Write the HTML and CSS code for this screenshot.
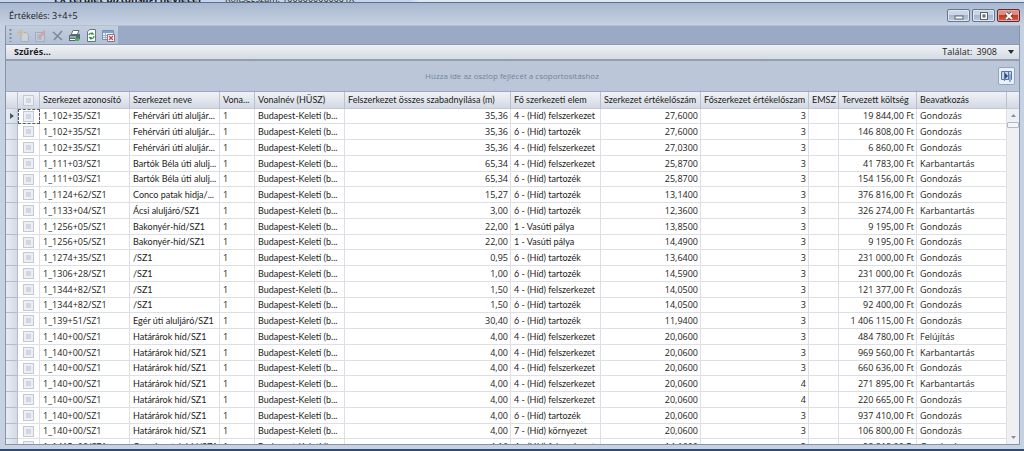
FILE: index.html
```html
<!DOCTYPE html>
<html lang="hu">
<head>
<meta charset="utf-8">
<title>Értékelés: 3+4+5</title>
<link rel="stylesheet" href="styles.css">
</head>
<body>
<div class="behind" aria-hidden="true"><b class="behind-title">EX terület biztonsági nevlecei</b><span class="behind-field">Költségszám: 1000000000001X</span></div>
<main class="window">
  <header class="titlebar">
    <h1 class="title">Értékelés: 3+4+5</h1>
    <div class="controls">
      <button class="ctl" type="button" aria-label="Kis méret"><svg width="12" height="10" viewBox="0 0 12 10"><rect x="2" y="5" width="8" height="3" fill="#fff" stroke="#5b6470"/></svg></button>
      <button class="ctl" type="button" aria-label="Teljes méret"><svg width="12" height="10" viewBox="0 0 12 10"><rect x="2.500" y="1.500" width="7" height="7" fill="#fff" stroke="#5b6470"/><rect x="5" y="4" width="2" height="2" fill="#8c9db4" stroke="#5b6470"/></svg></button>
      <button class="ctl close" type="button" aria-label="Bezárás"><svg width="12" height="10" viewBox="0 0 12 10"><path d="M3 2l6 6M9 2L3 8" stroke="#6d3a3a" stroke-width="3.400"/><path d="M3 2l6 6M9 2L3 8" stroke="#fff" stroke-width="2"/></svg></button>
    </div>
  </header>
  <div class="client">
    <div class="toolrow">
      <div class="toolbar">
        <svg class="grip" width="3" height="14" viewBox="0 0 3 14"><path d="M1.500 1v13" stroke="#7f8ca5" stroke-width="2" stroke-dasharray="2 2"/></svg>
        <button class="tool" type="button" aria-label="Új" disabled><svg width="13" height="13" viewBox="0 0 13 13"><path d="M4 3.500h5l2.500 2.500v6.500H4z" fill="#cdd2da" stroke="#a9afba"/><path d="M3.500 0v7M0 3.500h7M1 1l5 5M6 1L1 6" stroke="#d3b998"/></svg></button>
        <button class="tool" type="button" aria-label="Szerkesztés" disabled><svg width="13" height="13" viewBox="0 0 13 13"><path d="M1.500 3.500h9v9h-9z" fill="#c6ccd8" stroke="#a3abba"/><path d="M3 6h3M3 8h3M3 10h5" stroke="#a3abba"/><path d="M5 9l6-7" stroke="#cfa3a8" stroke-width="2.500"/></svg></button>
        <button class="tool" type="button" aria-label="Törlés" disabled><svg width="13" height="13" viewBox="0 0 13 13"><path d="M2 3l9 8M11 2L3 11" stroke="#7d8797" stroke-width="1.600" fill="none"/></svg></button>
        <button class="tool" type="button" aria-label="Nyomtatás"><svg width="13" height="13" viewBox="0 0 13 13"><path d="M5 1.500h6L9 6H3z" fill="#fff" stroke="#64737b"/><path d="M1 6.500L4 5h8v5l-3 2H1z" fill="#546b70"/><path d="M2 7.500h6v1H2z" fill="#dce8e4"/><path d="M7 9h4v3H7z" fill="#58a65a"/><path d="M2 10h5v1H2z" fill="#fff"/></svg></button>
        <button class="tool" type="button" aria-label="Frissítés"><svg width="13" height="13" viewBox="0 0 13 13"><path d="M2.500 2.500L5 .500h5.500v12h-8z" fill="#fff" stroke="#66758a"/><path d="M4 6c0-2 3-2 4-1M9 7c0 3-3 3-4 2" fill="none" stroke="#38903f" stroke-width="1.300"/><path d="M7 3l2.500 2.500H6zM6 11L3.500 8H7z" fill="#38903f"/></svg></button>
        <button class="tool" type="button" aria-label="Exportálás"><svg width="13" height="13" viewBox="0 0 13 13"><path d="M.500 1.500h11v9H.500z" fill="#eef2f8" stroke="#7890b5"/><path d="M1 2h10v2H1z" fill="#7da0d2"/><path d="M1 6.500h5M1 8.500h5M3.500 4v6" stroke="#a5b2c8"/><path d="M5.500 5.500h7v7h-7z" fill="#fff" stroke="#8f7480"/><path d="M7 7l4 4M11 7l-4 4" stroke="#c54654" stroke-width="1.400"/></svg></button>
      </div>
    </div>
    <div class="filter">
      <strong>Szűrés...</strong>
      <button class="hits" type="button">Találat: <span class="count">3908</span><svg width="6" height="4" viewBox="0 0 6 4"><path d="M0 0h6L3 4z" fill="#222c3c"/></svg></button>
    </div>
    <div class="group">
      <span class="hint">Húzza ide az oszlop fejlécét a csoportosításhoz</span>
      <button class="columns" type="button" aria-label="Oszlopválasztó"><svg width="13" height="13" viewBox="0 0 13 13"><path d="M1.500 1.500h10v8h-10z" fill="#c3d4ec" stroke="#5877a5"/><path d="M4.500 2v9M8.500 2v8" stroke="#5877a5"/><path d="M5 3l3 3-3 3z" fill="#294a7b"/><path d="M9 4h2v8H9z" fill="#8fa9cf"/></svg></button>
    </div>
    <div class="grid">
      <table class="table">
        <colgroup><col class="w-mark"><col class="w-check"><col class="w-90"><col class="w-90"><col class="w-line"><col class="w-90"><col class="w-span"><col class="w-90"><col class="w-score"><col class="w-main"><col class="w-emsz"><col class="w-cost"><col></colgroup>
        <thead><tr><th></th><th class="check"><input type="checkbox" aria-label="Összes kijelölése"></th><th>Szerkezet azonosító</th><th>Szerkezet neve</th><th>Vona...</th><th>Vonalnév (HÜSZ)</th><th>Felszerkezet összes szabadnyílása (m)</th><th>Fő szerkezeti elem</th><th>Szerkezet értékelőszám</th><th>Főszerkezet értékelőszam</th><th>EMSZ</th><th>Tervezett költség</th><th>Beavatkozás</th></tr></thead>
        <tbody id="rows"></tbody>
      </table>
      <div class="scroll">
        <div class="scroll-head"></div>
        <button class="arrow" type="button" aria-label="Fel"><svg width="5" height="3" viewBox="0 0 5 3"><path d="M0 3h5L2.500 0z" fill="#8a919c"/></svg></button>
        <div class="thumb"></div>
        <button class="arrow down" type="button" aria-label="Le"><svg width="5" height="3" viewBox="0 0 5 3"><path d="M0 0h5L2.500 3z" fill="#8a919c"/></svg></button>
      </div>
    </div>
  </div>
</main>
<script src="rows.js"></script>
</body>
</html>
```
FILE: styles.css
```css
* { box-sizing: border-box; }

body {
  margin: 0;
  height: 100vh;
  overflow: hidden;
  display: flex;
  flex-direction: column;
  background: #33486b;
  color: #1c1c20;
  font: 9px/12px "Segoe UI", "Open Sans", "Noto Sans", sans-serif;
}

button {
  font: inherit;
  color: inherit;
  margin: 0;
  padding: 0;
  border: 0;
  background: none;
  display: flex;
  align-items: center;
  justify-content: center;
}

svg { display: block; flex: none; }

.behind {
  flex: none;
  height: 2px;
  overflow: hidden;
  display: flex;
  align-items: flex-end;
  gap: 24px;
  padding-left: 54px;
  background: linear-gradient(90deg, #c9d5e6 40%, #dfe7f3 41%);
  line-height: 6px;
}
.behind-title { font-size: 10px; }

.window {
  flex: 1;
  min-height: 0;
  margin-bottom: 2px;
  display: flex;
  flex-direction: column;
  padding: 0 4px 4px 5px;
  border-top: 1px solid #56719a;
  background: linear-gradient(#a9b8cf, #c6d1e2 22px, #c6d1e2);
}

.titlebar {
  flex: none;
  height: 22px;
  display: flex;
  align-items: center;
  justify-content: space-between;
  padding-left: 4px;
}
.title { margin: 0; font-size: 9px; font-weight: 400; padding-top: 3px; }
.controls { display: flex; gap: 2px; padding-top: 3px; }
.ctl {
  width: 23px;
  height: 13px;
  border: 1px solid #65768f;
  border-radius: 2px;
  box-shadow: inset 0 0 0 1px #dde6f1;
  background: linear-gradient(#cbd7e6 45%, #a7b7cd 50%, #bccbdd);
}
.ctl.close {
  border-color: #5e2a30;
  box-shadow: inset 0 0 0 1px #e5a69c;
  background: linear-gradient(#dd8d80 45%, #bf3a2a 50%, #d0604b);
}

.client {
  flex: 1;
  min-height: 0;
  display: flex;
  flex-direction: column;
  border: 1px solid #8593ab;
  border-top-color: #b3bfd2;
}

.toolrow { flex: none; height: 18px; display: flex; background: #9aa9c4; }
.toolbar {
  display: flex;
  align-items: center;
  gap: 4px;
  padding: 0 3px;
  background: linear-gradient(#c2cddd, #b3c0d5);
}
.grip { margin-right: 1px; }
.tool { width: 13px; height: 16px; }

.filter {
  flex: none;
  height: 17px;
  display: flex;
  align-items: center;
  justify-content: space-between;
  padding: 0 5px 0 8px;
  border-top: 1px solid #8f9bb0;
  border-bottom: 2px solid #949fae;
  background: linear-gradient(#eef1f5, #d5dbe4);
}
.hits { padding-left: 4px; }
.count { margin: 0 11px 0 4px; }

.group {
  flex: none;
  height: 31px;
  display: flex;
  align-items: center;
  padding-right: 4px;
  border-bottom: 1px solid #9aabc6;
  background: #bbc7d8;
}
.hint { flex: 1; padding-left: 20px; text-align: center; font-size: 8px; color: #74839b; }
.columns {
  width: 17px;
  height: 18px;
  border: 1px solid #93a6c4;
  border-radius: 2px;
  background: #eaf0f9;
}

.grid { flex: 1; min-height: 0; overflow: hidden; display: flex; align-items: stretch; background: #fff; }

.table {
  flex: 1;
  min-width: 0;
  align-self: flex-start;
  table-layout: fixed;
  border-collapse: separate;
  border-spacing: 0;
  width: 100%;
}
.w-mark { width: 12px; }
.w-check { width: 22px; }
.w-90 { width: 90px; }
.w-line { width: 35px; }
.w-span { width: 166px; }
.w-score { width: 100px; }
.w-main { width: 108px; }
.w-emsz { width: 30px; }
.w-cost { width: 78px; }

th, td {
  padding: 0 2px 0 3px;
  white-space: nowrap;
  text-align: left;
  font-weight: 400;
  border-right: 1px solid #dcdfe6;
  border-bottom: 1px solid #dcdfe6;
}
th {
  height: 17px;
  border-right-color: #b9c1d0;
  border-bottom-color: #c2c8d5;
  background: linear-gradient(#f0f2f6, #d3d8e3);
}
th, .text { font-family: "Segoe UI", Lato, "Open Sans", sans-serif; }
td { height: 16px; }
tr:nth-child(4n+1) td { height: 15px; }
td.num { text-align: right; }
.mark {
  padding: 0 0 0 4px;
  background: linear-gradient(90deg, #e9edf4, #d3dae6);
  border-color: #b3bdce;
}
th.check, td.check { padding: 0; }
.current .check { outline: 1px dashed #555b66; outline-offset: -1px; }
.check input {
  appearance: none;
  display: block;
  width: 11px;
  height: 11px;
  margin: 0 auto;
  border: 1px solid #c3c8d2;
  background: #d2d6e1;
  box-shadow: inset 0 0 0 2px #eceff4;
}

.scroll {
  flex: none;
  width: 12px;
  display: flex;
  flex-direction: column;
  background: #eef0f4;
}
.scroll-head { height: 17px; border-bottom: 1px solid #c2c8d5; background: linear-gradient(#f0f2f6, #d3d8e3); }
.arrow { height: 13px; }
.arrow.down { margin-top: auto; }
.thumb { height: 6px; border: 1px solid #b3b9c5; border-radius: 1px; background: #f4f5f8; }
```
FILE: rows.js
```js
const FEL = "4 - (Híd) felszerkezet";
const TAR = "6 - (Híd) tartozék";
const VAS = "1 - Vasúti pálya";
const G = "Gondozás";
const K = "Karbantartás";
const data = [
  ["1_102+35/SZ1", "Fehérvári úti aluljár...", "35,36", FEL, "27,6000", "3", "19 844", G],
  ["1_102+35/SZ1", "Fehérvári úti aluljár...", "35,36", TAR, "27,6000", "3", "146 808", G],
  ["1_102+35/SZ1", "Fehérvári úti aluljár...", "35,36", FEL, "27,0300", "3", "6 860", G],
  ["1_111+03/SZ1", "Bartók Béla úti alulj...", "65,34", FEL, "25,8700", "3", "41 783", K],
  ["1_111+03/SZ1", "Bartók Béla úti alulj...", "65,34", TAR, "25,8700", "3", "154 156", G],
  ["1_1124+62/SZ1", "Conco patak hidja/...", "15,27", TAR, "13,1400", "3", "376 816", G],
  ["1_1133+04/SZ1", "Ácsi aluljáró/SZ1", "3,00", TAR, "12,3600", "3", "326 274", K],
  ["1_1256+05/SZ1", "Bakonyér-híd/SZ1", "22,00", VAS, "13,8500", "3", "9 195", G],
  ["1_1256+05/SZ1", "Bakonyér-híd/SZ1", "22,00", VAS, "14,4900", "3", "9 195", G],
  ["1_1274+35/SZ1", "/SZ1", "0,95", TAR, "13,6400", "3", "231 000", G],
  ["1_1306+28/SZ1", "/SZ1", "1,00", TAR, "14,5900", "3", "231 000", G],
  ["1_1344+82/SZ1", "/SZ1", "1,50", FEL, "14,0500", "3", "121 377", G],
  ["1_1344+82/SZ1", "/SZ1", "1,50", TAR, "14,0500", "3", "92 400", G],
  ["1_139+51/SZ1", "Egér úti aluljáró/SZ1", "30,40", TAR, "11,9400", "3", "1 406 115", G],
  ["1_140+00/SZ1", "Határárok híd/SZ1", "4,00", FEL, "20,0600", "3", "484 780", "Felújítás"],
  ["1_140+00/SZ1", "Határárok híd/SZ1", "4,00", FEL, "20,0600", "3", "969 560", K],
  ["1_140+00/SZ1", "Határárok híd/SZ1", "4,00", FEL, "20,0600", "3", "660 636", G],
  ["1_140+00/SZ1", "Határárok híd/SZ1", "4,00", FEL, "20,0600", "4", "271 895", K],
  ["1_140+00/SZ1", "Határárok híd/SZ1", "4,00", FEL, "20,0600", "4", "220 665", G],
  ["1_140+00/SZ1", "Határárok híd/SZ1", "4,00", TAR, "20,0600", "3", "937 410", G],
  ["1_140+00/SZ1", "Határárok híd/SZ1", "4,00", "7 - (Híd) környezet", "20,0600", "3", "106 800", G],
  ["1_1415+00/SZ1", "Concó-patak híd/SZ1", "4,16", FEL, "14,1600", "3", "98 818", G]
];

const cell = (text, cls = "") => `<td class="${cls}">${text}</td>`;
const pointer = '<svg width="4" height="6" viewBox="0 0 4 6"><path d="M0 0l4 3-4 3z" fill="#4a5569"/></svg>';

document.getElementById("rows").innerHTML = data.map(([id, name, span, part, score, main, cost, action], i) =>
  `<tr class="${i ? "" : "current"}">` +
  cell(i ? "" : pointer, "mark") +
  cell(`<input type="checkbox" aria-label="${id} kijelölése">`, "check") +
  cell(id) + cell(name, "text") + cell("1") + cell("Budapest-Keleti (b...", "text") +
  cell(span, "num") + cell(part, "text") + cell(score, "num") + cell(main, "num") +
  cell("") + cell(cost + ",00 Ft", "num") + cell(action) + "</tr>"
).join("");
```
